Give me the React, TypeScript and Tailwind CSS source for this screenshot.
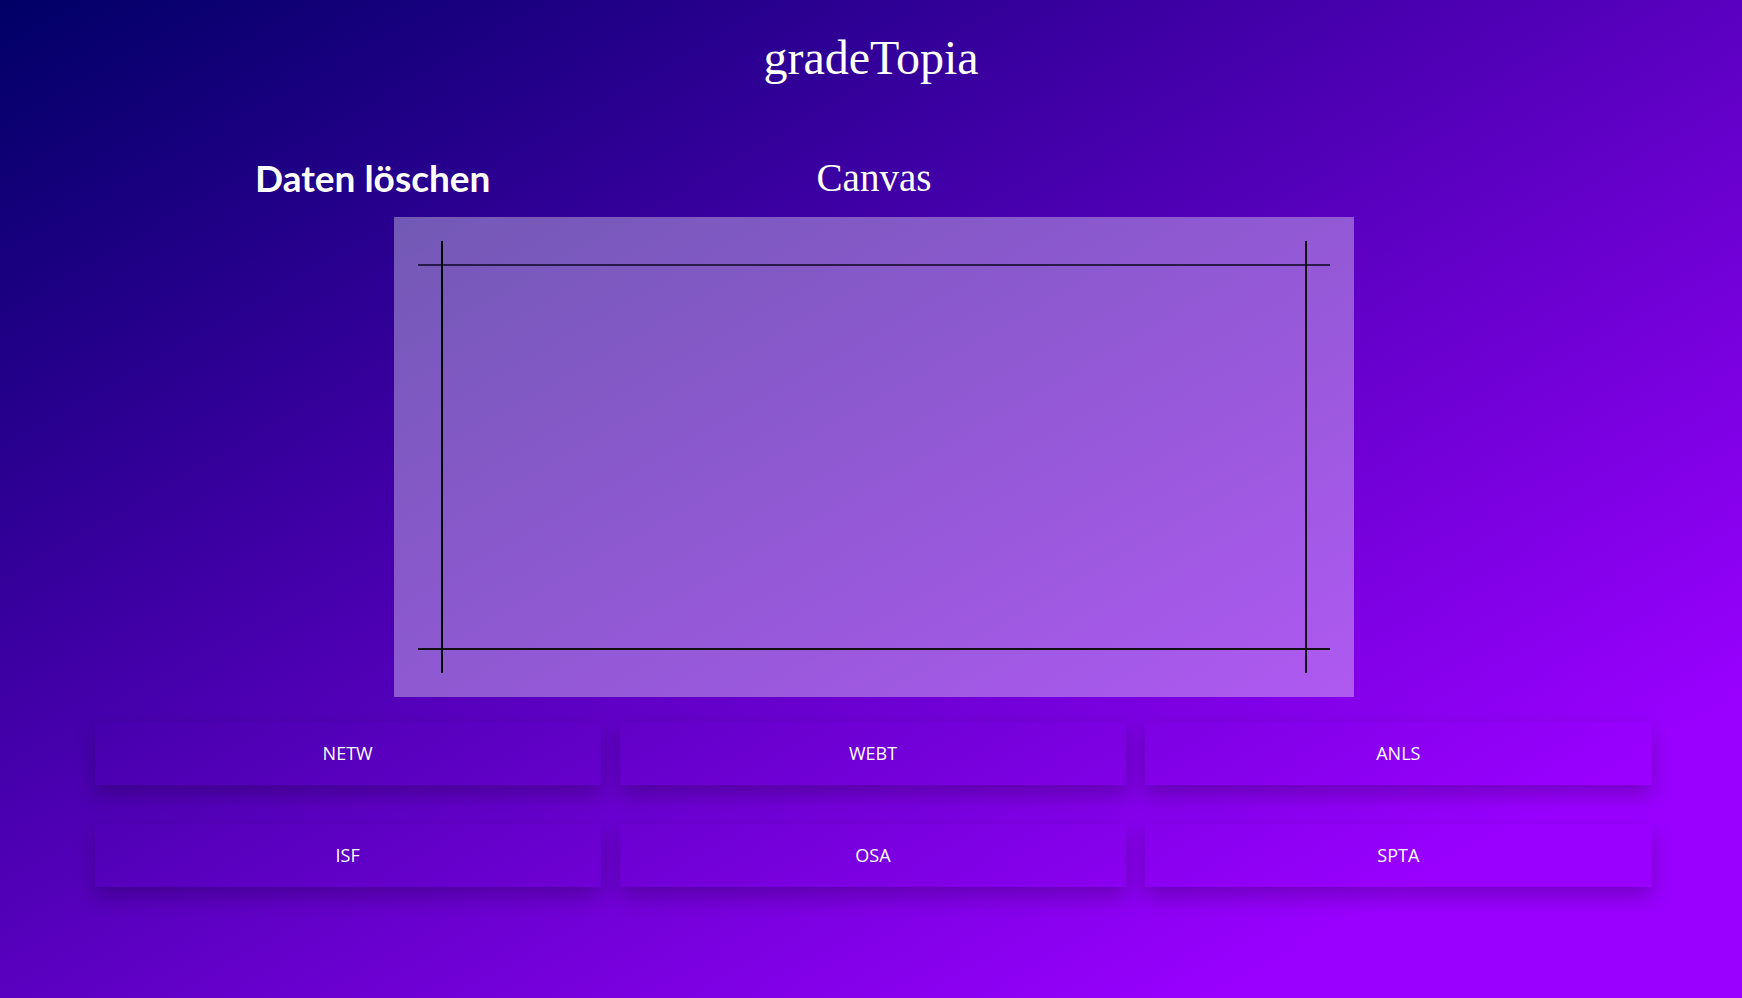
const subjects = ["NETW", "WEBT", "ANLS", "ISF", "OSA", "SPTA"];

export default function App() {
  return (
    <div className="min-h-[998px] w-full bg-[linear-gradient(to_bottom_right,#000066,#9900ff_85%)] text-white">
      <h1 className="pt-[30px] text-center text-[48px] leading-[56px] font-['Liberation_Serif',serif]">
        gradeTopia
      </h1>

      <div className="mt-[70px] grid grid-cols-[394px_960px_1fr]">
        <h2 className="pl-[255px] whitespace-nowrap text-[37px] leading-[44px] font-bold font-['Lato',sans-serif]">
          Daten löschen
        </h2>
        <h3 className="text-center text-[39px] leading-[44px] font-['Liberation_Serif',serif]">Canvas</h3>
        <div />

        <div />
        <div className="relative mt-[17px] h-[480px] bg-white/35">
          {/* canvas drawing: axes frame */}
          <svg width="960" height="480" className="block">
            <line x1="24" y1="48" x2="936" y2="48" stroke="#2a1a4a" strokeWidth="2" />
            <line x1="24" y1="432" x2="936" y2="432" stroke="#111" strokeWidth="2" />
            <line x1="48" y1="24" x2="48" y2="456" stroke="#000" strokeWidth="2" />
            <line x1="912" y1="24" x2="912" y2="456" stroke="#111" strokeWidth="2" />
          </svg>
        </div>
        <div />
      </div>

      <div className="mx-auto mt-[25px] grid w-[1557px] translate-x-[2px] grid-cols-3 gap-x-[19px] gap-y-[39px]">
        {subjects.map((s) => (
          <button
            key={s}
            className="h-[63px] text-[18px] font-['Open_Sans',sans-serif] text-white shadow-[0_10px_20px_rgba(0,0,0,0.22)]"
          >
            {s}
          </button>
        ))}
      </div>
    </div>
  );
}
